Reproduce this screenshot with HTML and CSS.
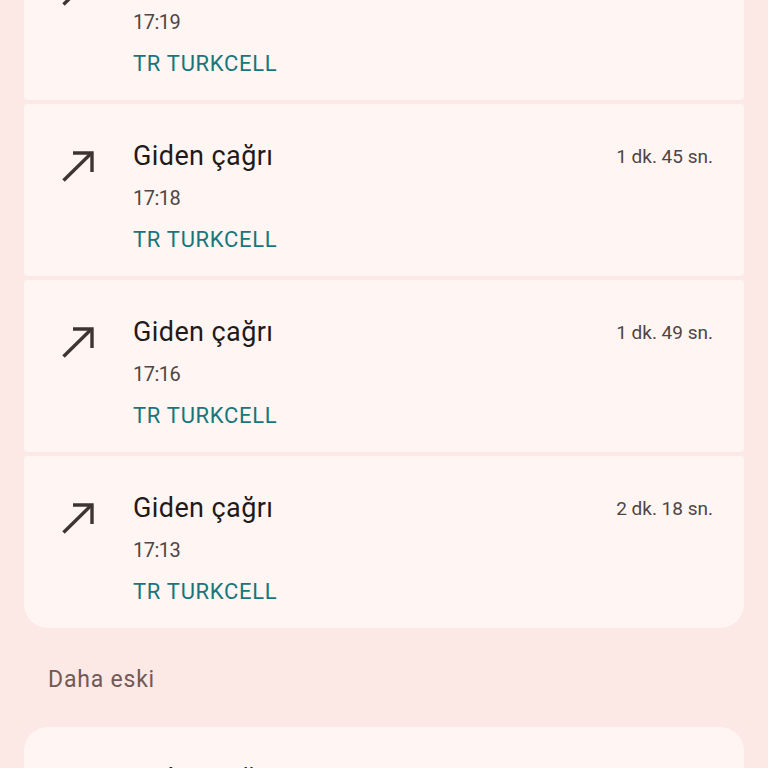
FILE: index.html
```html
<!DOCTYPE html>
<html lang="tr">
<head>
<meta charset="utf-8">
<title>Arama geçmişi</title>
<link rel="stylesheet" href="styles.css">
</head>
<body>
<main class="page">
  <section class="group group-today">
    <div class="call">
      <svg class="icon" viewBox="0 0 48 48"><path d="M18 11H37V30" /><path d="M8.5 38.5L36 11.5" /></svg>
      <div class="info">
        <div class="title">Giden çağrı</div>
        <div class="time">17:19</div>
        <div class="carrier">TR TURKCELL</div>
      </div>
      <div class="duration">1 dk. 12 sn.</div>
    </div>
    <div class="call">
      <svg class="icon" viewBox="0 0 48 48"><path d="M18 11H37V30" /><path d="M8.5 38.5L36 11.5" /></svg>
      <div class="info">
        <div class="title">Giden çağrı</div>
        <div class="time">17:18</div>
        <div class="carrier">TR TURKCELL</div>
      </div>
      <div class="duration">1 dk. 45 sn.</div>
    </div>
    <div class="call">
      <svg class="icon" viewBox="0 0 48 48"><path d="M18 11H37V30" /><path d="M8.5 38.5L36 11.5" /></svg>
      <div class="info">
        <div class="title">Giden çağrı</div>
        <div class="time">17:16</div>
        <div class="carrier">TR TURKCELL</div>
      </div>
      <div class="duration">1 dk. 49 sn.</div>
    </div>
    <div class="call">
      <svg class="icon" viewBox="0 0 48 48"><path d="M18 11H37V30" /><path d="M8.5 38.5L36 11.5" /></svg>
      <div class="info">
        <div class="title">Giden çağrı</div>
        <div class="time">17:13</div>
        <div class="carrier">TR TURKCELL</div>
      </div>
      <div class="duration">2 dk. 18 sn.</div>
    </div>
  </section>
  <h2 class="section-label">Daha eski</h2>
  <section class="group">
    <div class="call">
      <svg class="icon" viewBox="0 0 48 48"><path d="M18 11H37V30" /><path d="M8.5 38.5L36 11.5" /></svg>
      <div class="info">
        <div class="title">Giden çağrı</div>
        <div class="time">Dün</div>
        <div class="carrier">TR TURKCELL</div>
      </div>
      <div class="duration">3 dk. 02 sn.</div>
    </div>
  </section>
</main>
</body>
</html>
```

FILE: styles.css
```css
html, body {
  margin: 0;
  padding: 0;
  background: #fce8e5;
  font-family: Roboto, "Noto Sans", "Liberation Sans", sans-serif;
  overflow: hidden;
}

.page {
  padding: 0 24px;
  margin-top: -72px;
}

.group {
  display: flex;
  flex-direction: column;
  gap: 4px;
  border-radius: 24px;
  overflow: hidden;
}

.call {
  display: flex;
  align-items: flex-start;
  height: 172px;
  box-sizing: border-box;
  padding: 32px 31px 0 31px;
  background: #fff5f3;
  border-radius: 4px;
}

.icon {
  width: 48px;
  height: 48px;
  flex: none;
  margin-top: 6px;
  fill: none;
  stroke: #3e3533;
  stroke-width: 3.4;
  stroke-linejoin: miter;
  stroke-linecap: butt;
}

.info {
  flex: 1;
  margin-left: 30px;
  display: flex;
  flex-direction: column;
}

.title {
  font-size: 27px;
  line-height: 41px;
  letter-spacing: 0.4px;
  color: #1f1a19;
}

.time {
  font-size: 20px;
  line-height: 41px;
  letter-spacing: -0.5px;
  margin-top: 1px;
  color: #4f4543;
}

.carrier {
  font-size: 22px;
  line-height: 41px;
  letter-spacing: 0.7px;
  color: #17767a;
}

.duration {
  font-size: 19px;
  line-height: 41px;
  color: #4f4543;
}

.section-label {
  margin: 0;
  padding: 0 24px;
  height: 99px;
  display: flex;
  align-items: center;
  padding-top: 3px;
  box-sizing: border-box;
  font-size: 23px;
  font-weight: 400;
  letter-spacing: 0.8px;
  color: #735955;
}
```
